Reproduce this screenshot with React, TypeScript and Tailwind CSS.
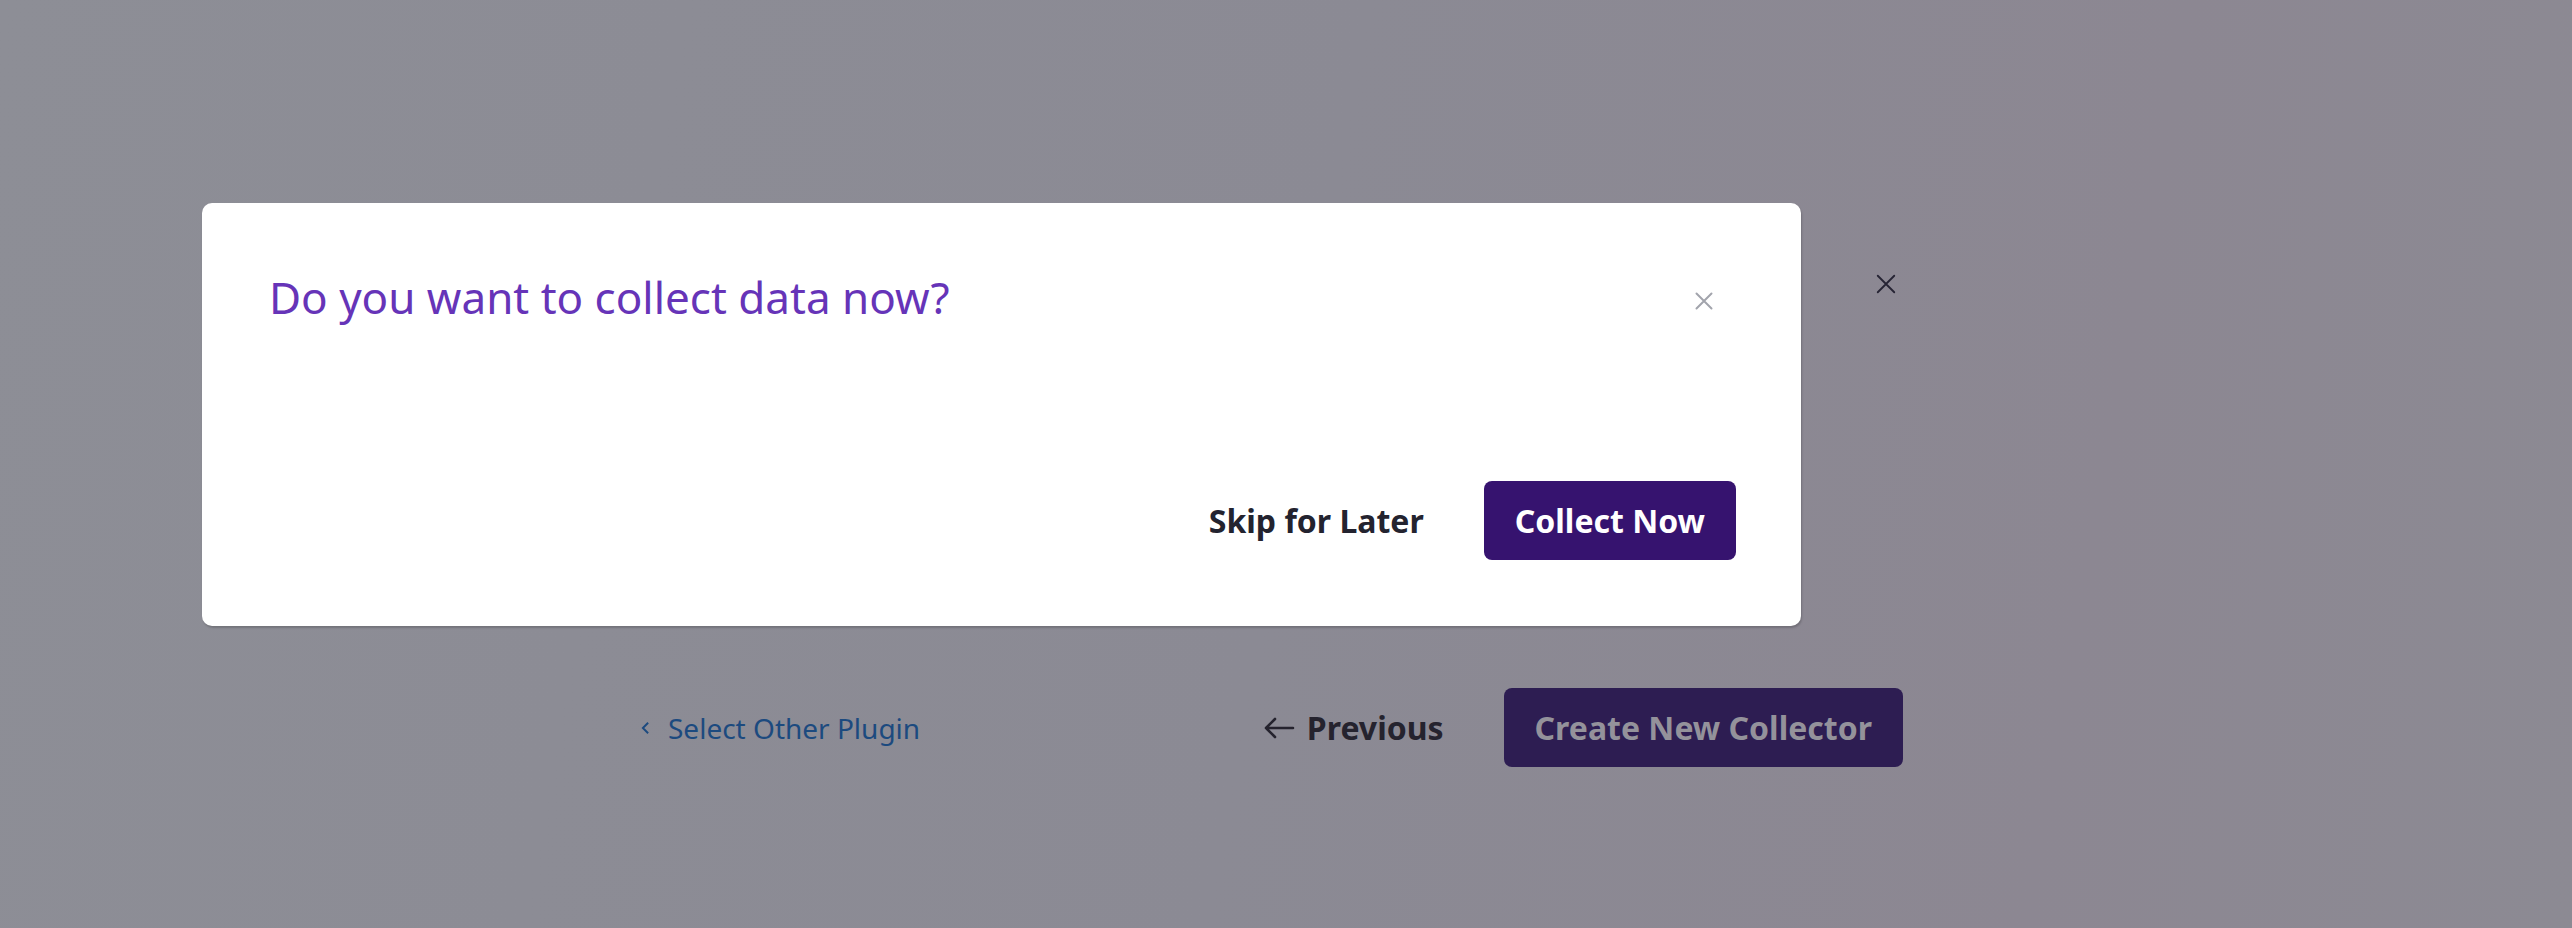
import { useState } from "react";

function CloseIcon({ className, width = 2 }: { className?: string; width?: number }) {
  return (
    <svg viewBox="0 0 24 24" fill="none" stroke="currentColor" strokeWidth={width} strokeLinecap="round" className={className}>
      <path d="M3 3l18 18M21 3L3 21" />
    </svg>
  );
}

export default function App() {
  const [open, setOpen] = useState(true);

  return (
    <div
      className="relative h-[928px] w-full overflow-hidden bg-[linear-gradient(100deg,#8d8e96_0%,#8b8a94_50%,#8c8792_80%,#8c8a93_100%)]"
      style={{ fontFamily: '"Noto Sans", "Open Sans", sans-serif' }}
    >
      {/* page behind the dialog, already dimmed by the overlay */}
      <div className="ml-[620px] flex w-[1300px] flex-col">
        <div className="flex justify-end pr-[23px] pt-[273px]">
          <button className="text-[#262434]" aria-label="Close">
            <CloseIcon className="h-[22px] w-[22px]" />
          </button>
        </div>
        <div className="mt-[393px] flex items-center justify-between pl-[21px] pr-[17px]">
          <button className="flex items-center gap-[18px] text-[28px] text-[#1c4a7f]">
            <svg viewBox="0 0 10 16" fill="none" stroke="currentColor" strokeWidth={2.2} className="h-[14px] w-[9px]">
              <path d="M8 2L2 8l6 6" />
            </svg>
            Select Other Plugin
          </button>
          <div className="flex items-center gap-[60px]">
            <button className="flex items-center gap-[12px] text-[32px] font-bold text-[#25232e]">
              <svg viewBox="0 0 32 32" fill="none" stroke="currentColor" strokeWidth={2.6} strokeLinecap="round" strokeLinejoin="round" className="h-[32px] w-[32px]">
                <path d="M30 16H3M12 7l-9 9 9 9" />
              </svg>
              Previous
            </button>
            <button className="h-[79px] rounded-[8px] bg-[#2d1d52] px-[31px] text-[32px] font-bold text-[#94929b]">
              Create New Collector
            </button>
          </div>
        </div>
      </div>

      {open && (
        <div className="absolute left-[202px] top-[203px] flex h-[423px] w-[1599px] flex-col justify-between rounded-[10px] bg-white pb-[66px] pl-[67px] pr-[65px] pt-[64px] shadow-[1px_2px_2px_rgba(0,0,0,0.18)]">
          <div className="flex items-start justify-between">
            <h2 className="text-[44px] font-normal leading-[60px] text-[#6634b8]">Do you want to collect data now?</h2>
            <button onClick={() => setOpen(false)} className="mr-[22px] mt-[24px] text-[#a2a4ac]" aria-label="Close">
              <CloseIcon className="h-[20px] w-[20px]" width={2.4} />
            </button>
          </div>
          <div className="flex items-center justify-end gap-[29px]">
            <button className="h-[79px] px-[31px] text-[32px] font-bold text-[#23232f]">Skip for Later</button>
            <button className="h-[79px] rounded-[8px] bg-[#36136f] px-[31px] text-[32px] font-bold text-white">
              Collect Now
            </button>
          </div>
        </div>
      )}
    </div>
  );
}
